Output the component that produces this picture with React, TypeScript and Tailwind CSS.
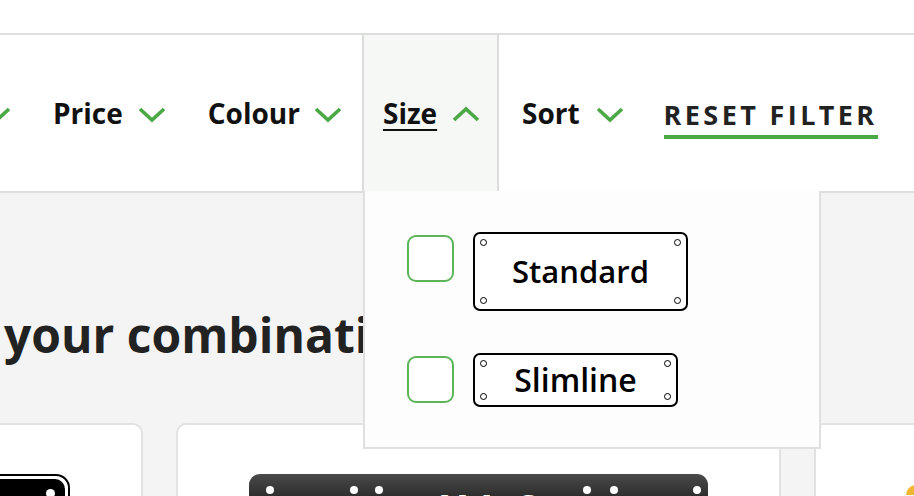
import React from "react";

function Chevron({ up = false, className = "" }: { up?: boolean; className?: string }) {
  return (
    <svg
      width="28"
      height="16"
      viewBox="0 0 28 16"
      className={className}
      fill="none"
      stroke="#4aa845"
      strokeWidth="3.6"
      strokeLinejoin="miter"
    >
      {up ? <polyline points="2,14 14,3 26,14" /> : <polyline points="2,2 14,13 26,2" />}
    </svg>
  );
}

function Dot({ pos }: { pos: string }) {
  return <span className={`absolute w-[7px] h-[7px] rounded-full border-[1.5px] border-black bg-white ${pos}`} />;
}

function Plate({ label, w, h, size }: { label: string; w: string; h: string; size: string }) {
  return (
    <div className={`relative ${w} ${h} shrink-0 border-2 border-black rounded-[7px] bg-white flex items-center justify-center`}>
      <Dot pos="top-[5px] left-[5px]" />
      <Dot pos="top-[5px] right-[5px]" />
      <Dot pos="bottom-[5px] left-[5px]" />
      <Dot pos="bottom-[5px] right-[5px]" />
      <span className={`${size} font-semibold text-black leading-none`}>{label}</span>
    </div>
  );
}

function Option({ label, w, h, size }: { label: string; w: string; h: string; size: string }) {
  return (
    <div className="flex items-start gap-[19px]">
      <span className="mt-[3px] w-[47px] h-[47px] rounded-[9px] border-2 border-[#5db55a] bg-white shrink-0" />
      <Plate label={label} w={w} h={h} size={size} />
    </div>
  );
}

export default function App() {
  return (
    <div className="w-[914px] h-[496px] overflow-hidden bg-[#f4f4f5] font-['Open_Sans',sans-serif]">
      <div className="h-[35px] bg-white border-b-2 border-[#dedede]" />
      <div className="relative h-[158px] bg-white border-b-2 border-[#dedede]">
        <div className="flex items-center h-full text-[28px] font-bold text-[#111] whitespace-nowrap">
          <Chevron className="ml-[-17px] mt-[3px] shrink-0" />
          <span className="ml-[42px]">Price</span>
          <Chevron className="ml-[15px] mt-[3px] shrink-0" />
          <span className="ml-[42px]">Colour</span>
          <Chevron className="ml-[14px] mt-[3px] shrink-0" />
          <div className="ml-[20px] w-[137px] h-full shrink-0 border-x-2 border-[#dcdcdc] bg-[#f5f8f4] flex items-center pl-[19px]">
            <span className="underline decoration-2 underline-offset-[5px]">Size</span>
            <Chevron up className="ml-[15px] mt-[2px] shrink-0" />
          </div>
          <span className="ml-[23px]">Sort</span>
          <Chevron className="ml-[16px] mt-[3px] shrink-0" />
          <span className="ml-[40px] text-[27px] tracking-[3.4px] text-[#222] border-b-[4px] border-[#4aa845] pb-[0px] mt-[8px]">
            RESET FILTER
          </span>
        </div>
        <div className="absolute left-[363px] top-full z-10 w-[458px] h-[258px] bg-[#fdfdfd] border-2 border-t-0 border-[#e0e0e0] pt-[41px] pl-[42px] flex flex-col gap-[42px]">
          <Option label="Standard" w="w-[215px]" h="h-[79px]" size="text-[31px]" />
          <Option label="Slimline" w="w-[205px]" h="h-[54px]" size="text-[32px]" />
        </div>
      </div>
      <div className="pt-[113px]">
        <h1 className="pl-[4px] text-[48px] font-bold leading-[1.2] text-[#222] whitespace-nowrap">
          your combination
        </h1>
        <div className="mt-[59px] ml-[-462px] flex gap-[33px]">
          <div className="w-[605px] h-[200px] shrink-0 bg-white border-2 border-[#e2e2e2] rounded-[10px] pt-[49px]">
            <div className="mx-auto w-[459px] h-[110px] rounded-[14px] border-2 border-black p-[3px] bg-white">
              <div className="relative w-full h-full rounded-[10px] bg-black">
                <span className="absolute right-[10px] top-[10px] w-[9px] h-[9px] rounded-full bg-white" />
              </div>
            </div>
          </div>
          <div className="w-[605px] h-[200px] shrink-0 bg-white border-2 border-[#e2e2e2] rounded-[10px] pt-[49px]">
            <div className="mx-auto w-[459px] h-[110px] rounded-[11px] bg-gradient-to-b from-[#4a4a4a] via-[#0a0a0a] to-black pt-[12px] flex items-start text-white">
              <span className="ml-[17px] w-[8px] h-[8px] rounded-full bg-white" />
              <span className="ml-[76px] w-[8px] h-[8px] rounded-full bg-white" />
              <span className="ml-[17px] w-[8px] h-[8px] rounded-full bg-white" />
              <span className="ml-[58px] mt-[2px] text-[40px] font-bold leading-none tracking-[14px]">YLS</span>
              <span className="ml-[30px] w-[8px] h-[8px] rounded-full bg-white" />
              <span className="ml-[19px] w-[8px] h-[8px] rounded-full bg-white" />
              <span className="ml-[75px] w-[8px] h-[8px] rounded-full bg-white" />
            </div>
          </div>
          <div className="w-[605px] h-[200px] shrink-0 bg-white border-2 border-[#e2e2e2] rounded-[10px] pt-[60px] pl-[90px]">
            <span className="block w-[14px] h-[10px] rounded-tl-full bg-[#f2b531]" />
          </div>
        </div>
      </div>
    </div>
  );
}
